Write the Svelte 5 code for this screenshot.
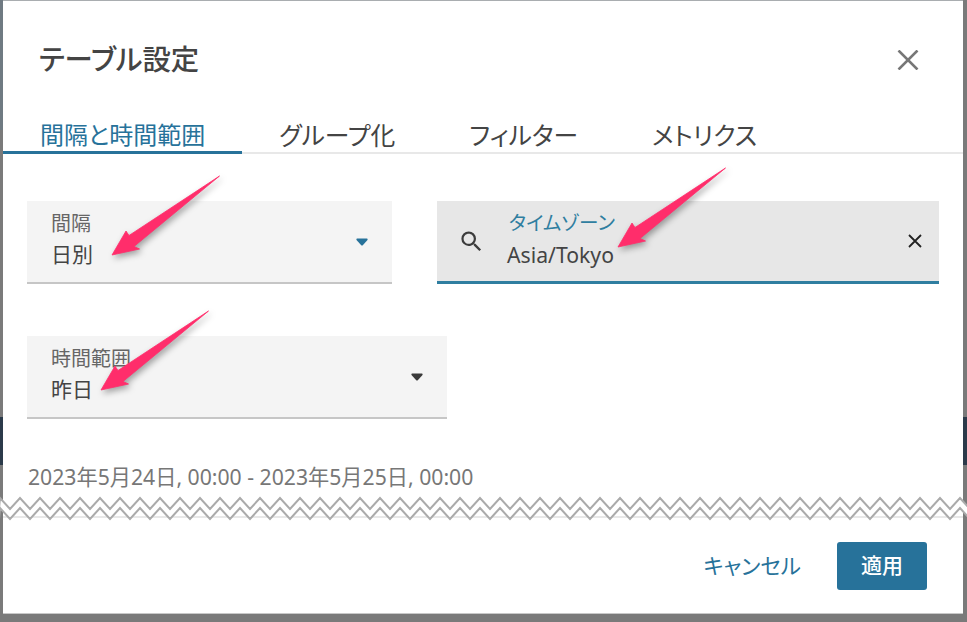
<script>
  const arrows = [
    { x: 0, y: 0 },
    { x: 506, y: -8 },
    { x: -11, y: 135 }
  ];
  const step = 20;
  const count = 49;
  let top = 'M-1 509';
  let bot = 'M-1 519';
  const topPts = [];
  const botPts = [];
  for (let i = 0; i < count; i++) {
    const px = i * step;
    top += ` L${px} 498 L${px + 10} 509`;
    bot += ` L${px} 508 L${px + 10} 519`;
    topPts.push(`${px} 498`, `${px + 10} 509`);
    botPts.push(`${px} 508`, `${px + 10} 519`);
  }
  const band = 'M' + topPts.join(' L') + ' L' + botPts.reverse().join(' L') + ' Z';
</script>

<div class="backdrop">
  <div class="edge edge-left"></div>
  <div class="edge edge-right"></div>
  <div class="edge-tint"></div>
  <div class="modal">
    <header class="head">
      <h2>テーブル設定</h2>
      <button class="close" aria-label="閉じる">
        <svg width="22" height="20" viewBox="0 0 22 20"><path d="M1.5 0.5 L20.5 19.5 M20.5 0.5 L1.5 19.5" fill="none" stroke="#777" stroke-width="2.6"/></svg>
      </button>
    </header>

    <nav class="tabs">
      <span class="tab active">間隔と時間範囲</span>
      <span class="tab">グループ化</span>
      <span class="tab">フィルター</span>
      <span class="tab">メトリクス</span>
    </nav>

    <section class="body">
      <div class="row">
        <div class="field interval">
          <div class="text">
            <span class="label">間隔</span>
            <span class="value">日別</span>
          </div>
          <svg class="caret" width="12" height="8" viewBox="0 0 12 8"><path d="M1 0.500 H11 Q12 0.500 11.500 2 L7 7 Q6 8 5 7 L0.500 2 Q0 0.500 1 0.500 Z" fill="#27729a"/></svg>
        </div>
        <div class="field zone">
          <svg class="search" width="27" height="27" viewBox="0 0 24 24"><path d="M15.5 14h-.79l-.28-.27A6.47 6.47 0 0 0 16 9.5 6.5 6.5 0 1 0 9.5 16c1.61 0 3.09-.59 4.23-1.57l.27.28v.79l5 4.99L20.49 19l-4.99-5zm-6 0C7.01 14 5 11.99 5 9.5S7.01 5 9.5 5 14 7.01 14 9.5 11.99 14 9.5 14z" fill="#3c3c3c"/></svg>
          <div class="text">
            <span class="label focus">タイムゾーン</span>
            <span class="value latin">Asia/Tokyo</span>
          </div>
          <svg class="clear" width="14" height="14" viewBox="0 0 14 14"><path d="M1 1 L13 13 M13 1 L1 13" fill="none" stroke="#222" stroke-width="1.8"/></svg>
        </div>
      </div>

      <div class="field range">
        <div class="text">
          <span class="label">時間範囲</span>
          <span class="value">昨日</span>
        </div>
        <svg class="caret" width="12" height="8" viewBox="0 0 12 8"><path d="M1 0.500 H11 Q12 0.500 11.500 2 L7 7 Q6 8 5 7 L0.500 2 Q0 0.500 1 0.500 Z" fill="#3a3a3a"/></svg>
      </div>

      <p class="dates">2023年5月24日, 00:00 - 2023年5月25日, 00:00</p>
    </section>

    <footer class="foot">
      <button class="cancel">キャンセル</button>
      <button class="apply">適用</button>
    </footer>
  </div>

  <svg class="tear" width="967" height="622" viewBox="0 0 967 622" aria-hidden="true">
    <path d={band} fill="#fff"/>
    <path d={top} fill="none" stroke="#ababab" stroke-width="2"/>
    <path d={bot} fill="none" stroke="#ababab" stroke-width="2"/>
  </svg>

  <svg class="arrows" width="967" height="622" viewBox="0 0 967 622" aria-hidden="true">
    {#each arrows as a}
      <path transform="translate({a.x} {a.y})" d="M219.500 176 L129 235.500 L126 231 L112 255 L139.500 249 L134 246.500 Z" fill="#ff2d6b" stroke="#ff2d6b" stroke-width="0.8" stroke-linejoin="round"/>
    {/each}
  </svg>
</div>

<style>
  :global(body) {
    margin: 0;
    background: #7a7a7a;
  }
  .backdrop {
    position: relative;
    width: 967px;
    height: 622px;
    box-sizing: border-box;
    padding: 1px 4px 9px 3px;
    background: #7a7a7a;
    overflow: hidden;
    font-family: "Noto Sans", "Noto Sans CJK JP", sans-serif;
    font-feature-settings: "palt";
    color: #444;
  }
  .edge {
    position: absolute;
    top: 417px;
    width: 4px;
    height: 48px;
    background: #2b3a4a;
  }
  .edge-left { left: 0; }
  .edge-right { right: 0; }
  .edge-tint {
    position: absolute;
    left: 0;
    top: 0;
    width: 3px;
    height: 130px;
    background: #6f7a82;
  }
  .modal {
    position: relative;
    height: 100%;
    background: #fff;
    display: flex;
    flex-direction: column;
    box-shadow: 0 -1px 0 #a9adb0, 0 1px 0 #c8c8c8;
  }
  .head {
    display: flex;
    align-items: center;
    justify-content: space-between;
    height: 117px;
    box-sizing: border-box;
    padding: 0 44px 0 36px;
  }
  h2 {
    margin: 0 0 1px;
    font-size: 28.400px;
    font-weight: 500;
    line-height: 36px;
    color: #444;
  }
  .close {
    display: flex;
    padding: 0;
    border: 0;
    background: none;
  }
  .tabs {
    display: flex;
    height: 34px;
    border-bottom: 2px solid #e8e8e8;
  }
  .tab {
    padding: 0 37px;
    font-size: 24.800px;
    line-height: 34px;
    color: #444;
    white-space: nowrap;
  }
  .active {
    font-size: 24px;
    color: #27729a;
    border-bottom: 3px solid #27729a;
    margin-bottom: -2px;
  }
  .body {
    display: flex;
    flex-direction: column;
    align-items: flex-start;
    padding: 47px 24px 0;
    flex: 1;
  }
  .row {
    display: flex;
    gap: 45px;
    width: 912px;
    margin-bottom: 52px;
  }
  .field {
    display: flex;
    align-items: center;
    height: 83px;
    box-sizing: border-box;
    background: #f4f4f4;
    border-bottom: 2px solid #c6c6c6;
    padding: 0 24px 0 24px;
  }
  .interval { width: 365px; }
  .range { width: 420px; }
  .zone {
    flex: 1;
    background: #e7e7e7;
    border-bottom: 3px solid #2f7ea0;
    padding: 0 17px 0 21px;
  }
  .text {
    flex: 1;
    display: flex;
    flex-direction: column;
    padding-bottom: 6px;
  }
  .label {
    font-size: 20px;
    line-height: 31px;
    color: #666;
  }
  .focus {
    font-size: 19.600px;
    padding-left: 2px;
    color: #2f7ea0;
  }
  .value {
    font-size: 21px;
    line-height: 31px;
    color: #444;
  }
  .latin {
    font-size: 21.200px;
    padding-top: 1px;
  }
  .search { margin-right: 22px; }
  .dates {
    margin: 43px 0 0 1px;
    font-size: 21.200px;
    line-height: 30px;
    color: #777;
    white-space: nowrap;
  }
  .foot {
    display: flex;
    align-items: center;
    justify-content: flex-end;
    gap: 36px;
    height: 97px;
    box-sizing: border-box;
    padding: 0 36px 0 0;
    border-top: 2px solid #e8e8e8;
  }
  button {
    font-family: inherit;
    font-feature-settings: inherit;
    cursor: pointer;
  }
  .cancel {
    padding: 0 0 3px;
    border: 0;
    background: none;
    font-size: 21.500px;
    color: #27729a;
  }
  .apply {
    width: 90px;
    height: 48px;
    padding: 0 0 3px;
    border: 0;
    border-radius: 3px;
    background: #27729a;
    color: #fff;
    font-size: 21px;
    font-weight: 500;
  }
  .tear, .arrows {
    position: absolute;
    left: 0;
    top: 0;
    pointer-events: none;
  }
  .arrows {
    filter: drop-shadow(2px 3px 3px rgba(0, 0, 0, 0.35));
  }
</style>
